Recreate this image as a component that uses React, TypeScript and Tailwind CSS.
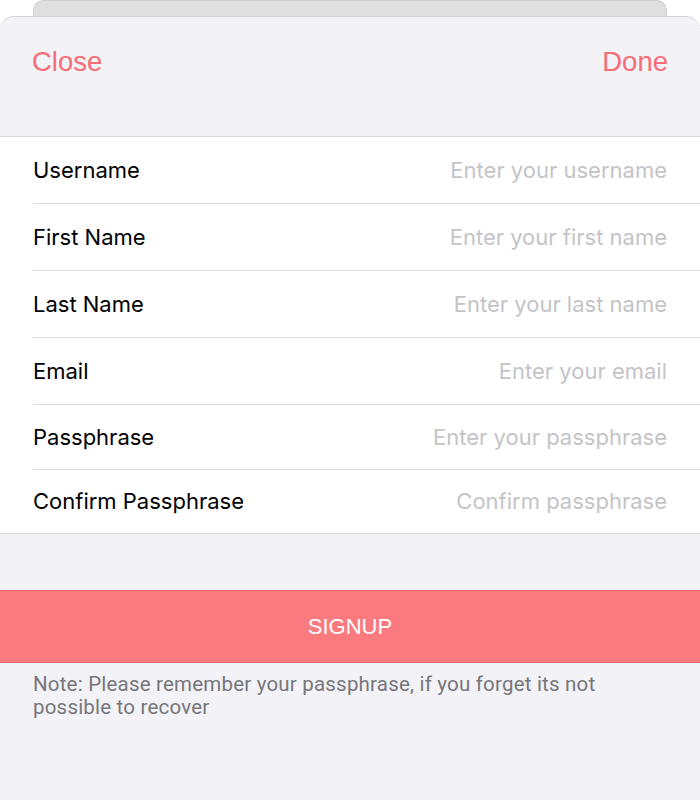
import React from "react";

const fields = [
  { label: "Username", placeholder: "Enter your username", h: "h-[67px]" },
  { label: "First Name", placeholder: "Enter your first name", h: "h-[67px]" },
  { label: "Last Name", placeholder: "Enter your last name", h: "h-[67px]" },
  { label: "Email", placeholder: "Enter your email", h: "h-[67px]" },
  { label: "Passphrase", placeholder: "Enter your passphrase", h: "h-[65px]" },
  { label: "Confirm Passphrase", placeholder: "Confirm passphrase", h: "h-[63px]" },
];

export default function App() {
  return (
    <div className="w-[700px] h-[800px] bg-white overflow-hidden flex flex-col font-['Inter',sans-serif]">
      {/* card peeking behind the sheet */}
      <div className="mx-[33px] h-[16px] shrink-0 bg-[#dfdfe0] rounded-t-[10px] border border-b-0 border-[#d0d0d2]" />

      {/* sheet */}
      <div className="flex-1 bg-[#f2f2f7] rounded-t-[14px] border-t border-[#d6d6da] flex flex-col">
        {/* header */}
        <div className="h-[120px] px-[32px] flex justify-between items-start pt-[24px] border-b border-[#d8d8dc] font-['Liberation_Sans',sans-serif] text-[27.5px] text-[#f66d75]">
          <button>Close</button>
          <button>Done</button>
        </div>

        {/* form fields */}
        <div className="bg-white border-b border-[#d8d8dc]">
          {fields.map((f, i) => (
            <div key={f.label} className={`pl-[33px] ${f.h}`}>
              <div
                className={`h-full pr-[33px] flex items-center justify-between ${
                  i < fields.length - 1 ? "border-b border-[#dcdce0]" : ""
                }`}
              >
                <span className="text-[22px] text-black">{f.label}</span>
                <input
                  className="text-[22px] text-right text-black placeholder:text-[#c4c4c8] outline-none bg-transparent w-[320px]"
                  placeholder={f.placeholder}
                />
              </div>
            </div>
          ))}
        </div>

        {/* signup */}
        <div className="mt-[56px] h-[73px] bg-[#fb7a7f] border-y border-[#e0696e] flex items-center justify-center">
          <span className="font-['Liberation_Sans',sans-serif] text-[22px] text-white">SIGNUP</span>
        </div>

        <p className="mt-[10px] px-[33px] pr-[70px] font-['Roboto',sans-serif] text-[20.5px] tracking-[0.2px] leading-[23px] text-[#76767b]">
          Note: Please remember your passphrase, if you forget its not possible to recover
        </p>
      </div>
    </div>
  );
}
